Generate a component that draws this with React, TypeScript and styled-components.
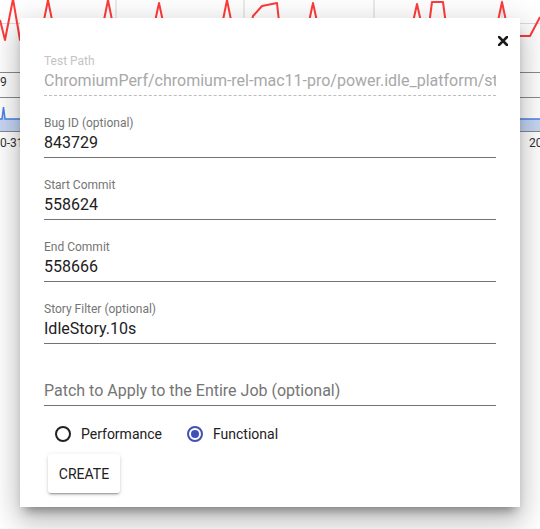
import React from "react";
import styled, { createGlobalStyle } from "styled-components";

const Global = createGlobalStyle`
  html, body { margin: 0; padding: 0; background: #ffffff; }
  body { font-family: Roboto, "Noto Sans", Arial, sans-serif; width: 540px; height: 529px; overflow: hidden; }
`;

const Page = styled.div`
  position: relative;
  width: 540px;
  height: 529px;
  overflow: hidden;
  background: #ffffff;
`;

const ChartBackdrop = styled.svg`
  display: block;
`;

const Dialog = styled.div`
  position: absolute;
  left: 20px;
  top: 18px;
  width: 500px;
  height: 489px;
  box-sizing: border-box;
  padding: 26px 24px 14px 24px;
  background: #ffffff;
  display: flex;
  flex-direction: column;
  box-shadow: 0 16px 24px 2px rgba(0, 0, 0, 0.14),
    0 6px 30px 5px rgba(0, 0, 0, 0.12), 0 8px 10px -5px rgba(0, 0, 0, 0.4);
`;

const CloseButton = styled.button`
  position: absolute;
  top: 11px;
  right: 5px;
  width: 24px;
  height: 24px;
  padding: 0;
  border: none;
  background: transparent;
  display: flex;
  align-items: center;
  justify-content: center;
  cursor: pointer;
`;

const Field = styled.div`
  padding: 9px 0 10px 0;
  display: flex;
  flex-direction: column;
`;

const Label = styled.div<{ $disabled?: boolean }>`
  font-size: 12px;
  line-height: 16px;
  height: 16px;
  color: ${(p) => (p.$disabled ? "#c4c4c4" : "#757575")};
`;

const Value = styled.div<{ $disabled?: boolean; $placeholder?: boolean }>`
  font-size: 16px;
  line-height: 24px;
  height: 24px;
  white-space: nowrap;
  overflow: hidden;
  color: ${(p) =>
    p.$disabled ? "#a8a8a8" : p.$placeholder ? "#757575" : "#212121"};
`;

const Underline = styled.div<{ $dashed?: boolean }>`
  margin-top: 2px;
  height: 0;
  border-bottom: 1px ${(p) => (p.$dashed ? "dashed #bdbdbd" : "solid #737373")};
`;

const RadioRow = styled.div`
  height: 36px;
  display: flex;
  align-items: center;
  gap: 25px;
  padding-left: 11px;
`;

const RadioItem = styled.label`
  display: flex;
  align-items: center;
  gap: 10px;
  font-size: 14px;
  color: #212121;
`;

const RadioCircle = styled.span<{ $checked?: boolean }>`
  width: 16px;
  height: 16px;
  box-sizing: border-box;
  border-radius: 50%;
  border: 2px solid ${(p) => (p.$checked ? "#3f51b5" : "#212121")};
  display: flex;
  align-items: center;
  justify-content: center;
  &::after {
    content: "";
    width: 8px;
    height: 8px;
    border-radius: 50%;
    background: ${(p) => (p.$checked ? "#3f51b5" : "transparent")};
  }
`;

const ButtonRow = styled.div`
  margin-top: 2px;
  display: flex;
`;

const RaisedButton = styled.button`
  margin-left: 4px;
  min-width: 72px;
  height: 39px;
  padding: 0 8px;
  border: none;
  border-radius: 3px;
  background: #ffffff;
  font-family: Roboto, "Noto Sans", Arial, sans-serif;
  font-size: 14px;
  font-weight: 400;
  text-transform: uppercase;
  color: #212121;
  box-shadow: 0 2px 2px 0 rgba(0, 0, 0, 0.14), 0 1px 5px 0 rgba(0, 0, 0, 0.12),
    0 3px 1px -2px rgba(0, 0, 0, 0.2);
`;

const spikes = [48, 108, 159, 227, 313, 417, 502];
const peakY: Record<number, number> = { 48: 0, 108: 0, 159: 3, 227: 0, 313: 3, 417: 4, 502: 2 };

function redPath(): string {
  let d = "M0,20 L5,40 L13,-1 L20,40 L40,40";
  const pts: string[] = [];
  for (const x of spikes) {
    pts.push(`L${x - 8},40 L${x},${peakY[x]} L${x + 8},40`);
    if (x === 227) {
      pts.push("L248,40 L253,16 L262,6 L277,3 L281,40");
    }
    if (x === 417) {
      pts.push("L427,40 L432,2 L443,2 L448,40");
    }
  }
  d += " " + pts.join(" ") + " L505,36 L530,36 L540,17";
  return d;
}

const Background = () => (
  <ChartBackdrop width="540" height="160" viewBox="0 0 540 160">
    <rect x="0" y="0" width="540" height="160" fill="#ffffff" />
    {[116, 244, 374, 502].map((x) => (
      <line key={x} x1={x} y1="0" x2={x} y2="60" stroke="#d6d6d6" strokeWidth="1" />
    ))}
    <line x1="0" y1="23.5" x2="540" y2="23.5" stroke="#dcdcdc" strokeWidth="1" />
    <path d={redPath()} fill="none" stroke="#ff3b3b" strokeWidth="2" strokeLinejoin="round" />
    <line x1="0" y1="72.5" x2="540" y2="72.5" stroke="#8a8a8a" strokeWidth="1" />
    <line x1="0" y1="97.5" x2="540" y2="97.5" stroke="#8a8a8a" strokeWidth="1" />
    <line x1="0" y1="131.5" x2="540" y2="131.5" stroke="#8a8a8a" strokeWidth="1" />
    <text x="0" y="86" fontSize="12" fill="#333333" fontFamily="Roboto, sans-serif">9</text>
    <path d="M0,119 L2,119 L3.5,107 L5,119 L540,119 L540,131 L0,131 Z" fill="#c6d7f5" />
    <path d="M0,119 L2,119 L3.5,107 L5,119 L540,119" fill="none" stroke="#4a82e8" strokeWidth="1.5" />
    <text x="0" y="147" fontSize="12" fill="#333333" fontFamily="Roboto, sans-serif">0-31</text>
    <text x="529" y="147" fontSize="12" fill="#333333" fontFamily="Roboto, sans-serif">20</text>
  </ChartBackdrop>
);

const CloseIcon = () => (
  <svg width="10" height="10" viewBox="0 0 10 10">
    <path d="M1,1 L9,9 M9,1 L1,9" stroke="#1a1a1a" strokeWidth="2.6" strokeLinecap="square" />
  </svg>
);

type FieldProps = { label: string; value: string; disabled?: boolean; placeholder?: boolean };

const InputField = ({ label, value, disabled, placeholder }: FieldProps) => (
  <Field>
    <Label $disabled={disabled}>{label}</Label>
    <Value $disabled={disabled} $placeholder={placeholder}>{value}</Value>
    <Underline $dashed={disabled} />
  </Field>
);

export default function App() {
  return (
    <>
      <Global />
      <Page>
        <Background />
        <Dialog>
          <CloseButton aria-label="close">
            <CloseIcon />
          </CloseButton>
          <InputField
            label="Test Path"
            value="ChromiumPerf/chromium-rel-mac11-pro/power.idle_platform/story_tags"
            disabled
          />
          <InputField label="Bug ID (optional)" value="843729" />
          <InputField label="Start Commit" value="558624" />
          <InputField label="End Commit" value="558666" />
          <InputField label="Story Filter (optional)" value="IdleStory.10s" />
          <InputField label="" value="Patch to Apply to the Entire Job (optional)" placeholder />
          <RadioRow>
            <RadioItem>
              <RadioCircle />
              Performance
            </RadioItem>
            <RadioItem>
              <RadioCircle $checked />
              Functional
            </RadioItem>
          </RadioRow>
          <ButtonRow>
            <RaisedButton>Create</RaisedButton>
          </ButtonRow>
        </Dialog>
      </Page>
    </>
  );
}
